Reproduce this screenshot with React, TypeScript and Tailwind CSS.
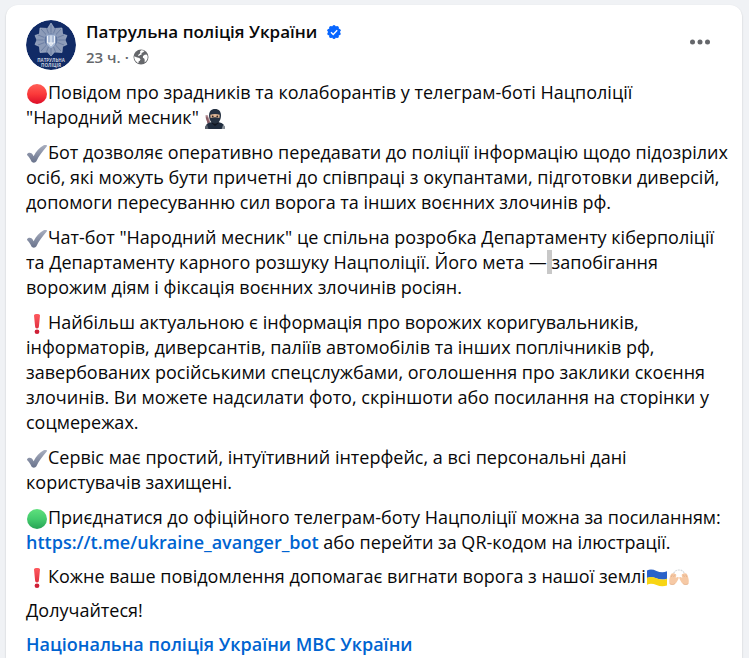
import type { ReactNode } from "react";

function Emoji({ label, children }: { label: string; children: ReactNode }) {
  return (
    <svg
      role="img"
      aria-label={label}
      viewBox="0 0 20 20"
      className="mx-px inline-block h-5 w-5 align-[-5px]"
    >
      {children}
    </svg>
  );
}

function RedCircle() {
  return (
    <Emoji label="red circle">
      <defs>
        <linearGradient id="red" x1="0" y1="0" x2="0" y2="1">
          <stop offset="0" stopColor="#ff5f57" />
          <stop offset="0.5" stopColor="#fb3a3a" />
          <stop offset="1" stopColor="#dc0d28" />
        </linearGradient>
      </defs>
      <circle cx="10" cy="10" r="10" fill="url(#red)" />
    </Emoji>
  );
}

function GreenCircle() {
  return (
    <Emoji label="green circle">
      <defs>
        <linearGradient id="green" x1="0" y1="0" x2="0" y2="1">
          <stop offset="0" stopColor="#5fe07d" />
          <stop offset="0.5" stopColor="#43cb6d" />
          <stop offset="1" stopColor="#27a355" />
        </linearGradient>
      </defs>
      <circle cx="10" cy="10" r="10" fill="url(#green)" />
    </Emoji>
  );
}

function Check() {
  return (
    <Emoji label="check mark">
      <defs>
        <linearGradient id="check" x1="0" y1="0" x2="0" y2="1">
          <stop offset="0" stopColor="#a9afc0" />
          <stop offset="1" stopColor="#69738c" />
        </linearGradient>
      </defs>
      <path
        d="M.2 10C1 8.700 3.200 8.200 4.500 9.300c.9.8 1.500 1.800 2.100 3C9 7.500 12.500 3.500 16.700 1.300c1.200-.6 2.500-.5 3-.1.500.4.300 1-.2 1.600C15.500 7.300 12 12 9.400 17.200c-.8 1.700-3.900 2-4.900.3C3.400 15.200 2.200 13 .5 11.500c-.5-.4-.6-1-.3-1.500z"
        fill="url(#check)"
      />
    </Emoji>
  );
}

function Exclamation() {
  return (
    <Emoji label="exclamation mark">
      <defs>
        <linearGradient id="excl" x1="0" y1="0" x2="0" y2="1">
          <stop offset="0" stopColor="#ff5a5f" />
          <stop offset="1" stopColor="#e0303f" />
        </linearGradient>
      </defs>
      <path
        d="M7 1.500C7 .5 8 0 10 0s3 .5 3 1.500L11.900 12.500c-.1 1.300-.8 2-1.900 2s-1.800-.7-1.900-2z"
        fill="url(#excl)"
      />
      <ellipse cx="10" cy="17.800" rx="2.400" ry="2.200" fill="#cf2036" />
    </Emoji>
  );
}

function Ninja() {
  return (
    <Emoji label="ninja">
      <path d="M.3 6.500l2.200-.5 2.800 7-2.500 2z" fill="#a9848a" />
      <path d="M.6 8.500l1.800-.5 2.400 6-2 .8z" fill="#8a5f68" />
      <path d="M0 20c.2-4 2.500-6.200 6-6.700h8c3.700.5 5.800 2.700 6 6.700z" fill="#1f2c3e" />
      <path d="M0 20c.1-2 .8-3.600 2-4.800L3.500 20z" fill="#59616c" />
      <path d="M16.700 20l1.500-4.500c1.100 1.200 1.700 2.700 1.800 4.500z" fill="#8d949c" />
      <path d="M6.500 14l3.500 3 3.700-3-.4-2H7z" fill="#10151f" />
      <path
        d="M10 0c4 0 6 2.700 6 6.500 0 4.200-2.300 8.200-6 8.200s-6-4-6-8.200C4 2.700 6 0 10 0z"
        fill="#263242"
      />
      <path d="M5.300 5.700c3-1 6.400-1 9.400 0l-.3 3.200c-2.800-.8-6-.8-8.800 0z" fill="#e0b795" />
      <circle cx="7.700" cy="7.300" r=".9" fill="#30231e" />
      <circle cx="12.300" cy="7.300" r=".9" fill="#30231e" />
    </Emoji>
  );
}

function Flag() {
  return (
    <Emoji label="flag of Ukraine">
      <path
        d="M0 2.500C3 1 6 1.400 9.500 2.900c3.500 1.500 7 1.700 10.500.4v7.400c-3.500 1.300-7 1-10.500-.3C6 9 3 8.700 0 10z"
        fill="#2a62c9"
      />
      <path
        d="M0 9.800C3 8.500 6 8.900 9.500 10.300c3.500 1.400 7 1.700 10.500.4v6.800c-3.500 1.200-7 1-10.500-.4C6 15.700 3 15.400 0 16.700z"
        fill="#f8d514"
      />
    </Emoji>
  );
}

function Hands() {
  return (
    <Emoji label="raising hands">
      <path
        d="M4.500 5.500C6 2.800 7.800 2 10 2s4 .8 5.500 3.500"
        fill="none"
        stroke="#d5d9dc"
        strokeWidth="1.200"
        strokeDasharray="2 .8"
      />
      <path
        id="hand"
        d="M.8 9.500C1.200 7 2.700 5 3.800 5.400c.9-.5 2-.3 2.200.5.9-.1 1.500.6 1.300 1.400l-.6 2.600c.8-.6 2-1.300 2.700-.8.7.6.2 1.700-.5 2.900-1 1.700-1.800 3.500-3.300 4.300-1.600.8-3.700.7-5-.3-.6-2-.5-4.100.2-6.500z"
        fill="#f6c9a5"
      />
      <use href="#hand" transform="matrix(-1 0 0 1 20 0)" />
      <path
        d="M2.300 9l1-2.300M4.600 9l.9-2.200M17.700 9l-1-2.300M15.400 9l-.9-2.200M.8 15.800c1.500 1 3.400 1 5 0M19.200 15.800c-1.500 1-3.400 1-5 0"
        fill="none"
        stroke="#dba67f"
        strokeWidth=".6"
      />
    </Emoji>
  );
}

function Avatar() {
  return (
    <a
      href="#profile"
      aria-label="Патрульна поліція України"
      className="block h-[50px] w-[50px] shrink-0 overflow-hidden rounded-full"
    >
      <svg viewBox="0 0 50 50" className="h-full w-full">
        <circle cx="25" cy="25" r="25" fill="#112b66" />
        <g fill="#8c9bb8" stroke="#a9b5ca" strokeWidth=".7">
          <path d="M25 3l3.500 5.500 7.500-.5.500 6 4.500 1.500-2 4.500 2 4.500-4.500 2-.5 6-7.500-.5L25 36l-3.500-4-7.500.5-.5-6-4.500-2 2-4.500-2-4.500 4.500-1.500.5-6 7.500.5z" />
          <path
            d="M25 5v30M11 20h28M15 9l20 22M35 9L15 31M20.500 8l9 24M29.500 8l-9 24M12 15l26 10M38 15L12 25"
            stroke="#5d7199"
            strokeWidth=".7"
          />
        </g>
        <circle cx="25" cy="20" r="7" fill="#5e749f" stroke="#8f9fbc" strokeWidth=".8" />
        <path d="M20.500 14.500h9v8c0 2.500-2 4-4.500 5.500-2.500-1.500-4.500-3-4.500-5.500z" fill="#a9bad6" />
        <path
          d="M21.500 16v7h7v-7M25 15.500V26M23.500 23c0 1.500.5 2 1.500 2.500 1-.5 1.500-1 1.500-2.500"
          fill="none"
          stroke="#f0f4fa"
          strokeWidth="1"
        />
        <text x="25" y="41.500" fill="#c5cede" fontSize="4.500" fontWeight="700" textAnchor="middle">
          ПАТРУЛЬНА
        </text>
        <text x="25" y="46.500" fill="#c5cede" fontSize="4.500" fontWeight="700" textAnchor="middle">
          ПОЛІЦІЯ
        </text>
      </svg>
    </a>
  );
}

function Verified() {
  return (
    <svg viewBox="0 0 14 14" role="img" aria-label="Підтверджено" className="h-[14px] w-[14px]">
      <g fill="#0866ff">
        <circle cx="7" cy="7" r="6" />
        <circle cx="7" cy="1.600" r="1.600" />
        <circle cx="10.200" cy="2.600" r="1.600" />
        <circle cx="12.100" cy="5.300" r="1.600" />
        <circle cx="12.100" cy="8.700" r="1.600" />
        <circle cx="10.200" cy="11.400" r="1.600" />
        <circle cx="7" cy="12.400" r="1.600" />
        <circle cx="3.800" cy="11.400" r="1.600" />
        <circle cx="1.900" cy="8.700" r="1.600" />
        <circle cx="1.900" cy="5.300" r="1.600" />
        <circle cx="3.800" cy="2.600" r="1.600" />
      </g>
      <path d="M4 7.200l2.200 2.200 4-4.200" fill="none" stroke="#fff" strokeWidth="1.400" />
    </svg>
  );
}

function Globe() {
  return (
    <svg viewBox="0 0 16 16" role="img" aria-label="Доступно всім" className="h-4 w-4">
      <circle cx="8" cy="8" r="7.500" fill="#65676b" />
      <path
        d="M1.300 7.300l2.200.9 2.800.8 1.200 1.300-.7 1.500-1.200.8-.1 1.600C3 13.200 1 10.500 1.300 7.300z"
        fill="#fff"
      />
      <path
        d="M8.200 1.300c1.200-.1 2.300.2 3.300.7l-1.300 1.300-1.700.8.200 1.500-1.500.5-1.300 1-1-.8 1.500-1.400.9-.8-.3-1.500z"
        fill="#fff"
      />
      <path
        d="M10 7l1.700-1.200 1.900-.3 1 1.500c.4 2.700-.8 5-3 6.400l.1-2.400-.5-1.500-1.300-.8z"
        fill="#fff"
      />
    </svg>
  );
}

export default function App() {
  return (
    <div className="min-h-screen bg-[#f0f2f5] pt-[5px] pr-[7px] pl-1.5 font-['Open_Sans','Noto_Sans',sans-serif] text-[#080809]">
      <article className="min-h-[653px] rounded-t-xl bg-white px-5 pt-[15px] shadow-[0_1px_2px_rgba(0,0,0,0.2)]">
        {/* HEADER */}
        <header className="flex items-start gap-2.5">
          <Avatar />
          <div className="flex-1">
            <h1 className="flex items-center gap-2.5 text-[17px] leading-6 font-semibold">
              <a href="#profile">Патрульна поліція України</a>
              <Verified />
            </h1>
            <div className="flex items-center gap-1 text-[15px] leading-[26px] font-semibold text-[#65676b]">
              <a href="#post">23 ч.</a>
              <span>·</span>
              <Globe />
            </div>
          </div>
          <button
            type="button"
            aria-label="Дії"
            className="mt-1.5 mr-1.5 flex h-8 w-8 items-center justify-center"
          >
            <svg viewBox="0 0 20 6" className="h-[6px] w-5" fill="#65676b">
              <circle cx="2.500" cy="3" r="2.500" />
              <circle cx="10" cy="3" r="2.500" />
              <circle cx="17.500" cy="3" r="2.500" />
            </svg>
          </button>
        </header>

        {/* POST TEXT */}
        <div className="mt-2.5 flex flex-col gap-2.5 text-[18px] leading-[25px] whitespace-nowrap">
          <p>
            <RedCircle />
            Повідом про зрадників та колаборантів у телеграм-боті Нацполіції
            <br />
            "Народний месник" <Ninja />
          </p>
          <p>
            <Check />
            Бот дозволяє оперативно передавати до поліції інформацію щодо підозрілих
            <br />
            осіб, які можуть бути причетні до співпраці з окупантами, підготовки диверсій,
            <br />
            допомоги пересуванню сил ворога та інших воєнних злочинів рф.
          </p>
          <p>
            <Check />
            Чат-бот "Народний месник" це спільна розробка Департаменту кіберполіції
            <br />
            та Департаменту карного розшуку Нацполіції. Його мета —
            <span className="bg-[#c8c8c8]"> </span>
            запобігання
            <br />
            ворожим діям і фіксація воєнних злочинів росіян.
          </p>
          <p>
            <Exclamation />
            Найбільш актуальною є інформація про ворожих коригувальників,
            <br />
            інформаторів, диверсантів, паліїв автомобілів та інших поплічників рф,
            <br />
            завербованих російськими спецслужбами, оголошення про заклики скоєння
            <br />
            злочинів. Ви можете надсилати фото, скріншоти або посилання на сторінки у
            <br />
            соцмережах.
          </p>
          <p>
            <Check />
            Сервіс має простий, інтуїтивний інтерфейс, а всі персональні дані
            <br />
            користувачів захищені.
          </p>
          <div className="flex flex-col gap-[9px]">
            <p>
              <GreenCircle />
              Приєднатися до офіційного телеграм-боту Нацполіції можна за посиланням:
              <br />
              <a href="https://t.me/ukraine_avanger_bot" className="font-semibold text-[#0064d1]">
                https://t.me/ukraine_avanger_bot
              </a>{" "}
              або перейти за QR-кодом на ілюстрації.
            </p>
            <p>
              <Exclamation />
              Кожне ваше повідомлення допомагає вигнати ворога з нашої землі
              <Flag />
              <Hands />
            </p>
            <p>Долучайтеся!</p>
            <p>
              <a href="#npu" className="font-semibold text-[#0064d1]">
                Національна поліція України МВС України
              </a>
            </p>
          </div>
        </div>
      </article>
    </div>
  );
}
